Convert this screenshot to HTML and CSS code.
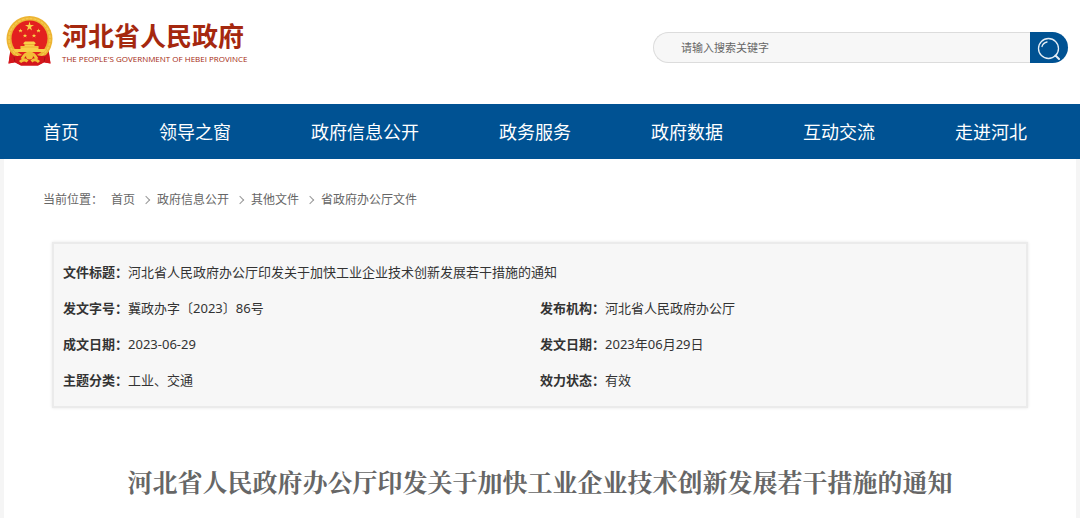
FILE: index.html
```html
<!DOCTYPE html>
<html lang="zh-CN">
<head>
    <meta charset="UTF-8">
    <title>河北省人民政府</title>
    <meta name="viewport" content="width=device-width, initial-scale=1.0">
    <link rel="stylesheet" href="styles.css">
</head>
<body>
    <header class="header">
        <a class="logo" href="#">
            <svg class="emblem" viewBox="0 0 94 100" aria-hidden="true">
                <path d="M9 66 L5 95 L18 93 L30 99 L64 99 L76 93 L89 95 L85 66 Z" fill="#d4161c"/>
                <circle cx="47" cy="46" r="46" fill="#edb433"/>
                <circle cx="47" cy="46" r="41" fill="none" stroke="#f5ca4e" stroke-width="3" stroke-dasharray="6 2"/>
                <circle cx="47" cy="45" r="36" fill="#e3211f"/>
                <path d="M47 11 L49 18 L56 18 L50 22 L52 29 L47 25 L42 29 L44 22 L38 18 L45 18 Z" fill="#f9d349"/>
                <path id="star" d="M29 25 l1 3 3 0 -2 2 1 3 -3 -2 -3 2 1 -3 -2 -2 3 0Z" fill="#f9d349"/>
                <use href="#star" x="36"/>
                <use href="#star" x="9" y="10"/>
                <use href="#star" x="27" y="10"/>
                <path d="M35 54 L38 51 H56 L59 54 V56 H57 V60 H65 V66 H80 L76 72 H18 L14 66 H29 V60 H37 V56 H35 Z" fill="#f9cf48"/>
                <path d="M37 57 H57 M30 62 H64" stroke="#e38a24" stroke-width="1"/>
                <path d="M8 76 Q24 84 36 76 H58 Q70 84 86 76 L89 95 L76 92 L64 99 H30 L18 92 L5 95 Z" fill="#d4161c"/>
                <path d="M32 86 Q38 74 47 74 Q56 74 62 86" fill="none" stroke="#f4be37" stroke-width="6"/>
                <circle cx="47" cy="80" r="7" fill="#f4be37"/>
                <path d="M28 92 Q36 84 43 91 M51 91 Q58 84 66 92" fill="none" stroke="#f4be37" stroke-width="6"/>
                <path d="M16 82 L18 92 M78 82 L76 92" stroke="#a91414" stroke-width="2"/>
            </svg>
            <span class="logo-text">
                <strong class="logo-name">河北省人民政府</strong>
                <span class="logo-en">THE PEOPLE'S GOVERNMENT OF HEBEI PROVINCE</span>
            </span>
        </a>
        <form class="search">
            <input type="text" class="search-input" placeholder="请输入搜索关键字" aria-label="请输入搜索关键字">
            <button type="submit" class="search-btn" aria-label="搜索">
                <svg viewBox="0 0 24 24" width="24" height="24" fill="none" stroke="#e4eef6" stroke-width="1.300" stroke-linecap="round">
                    <circle cx="11.500" cy="12.500" r="10"/>
                    <path d="M5 10.500 Q6 7 10 6"/>
                    <path d="M18.500 19.500 L22 23" stroke-width="2"/>
                </svg>
            </button>
        </form>
    </header>
    <nav class="nav">
        <a href="#">首页</a>
        <a href="#">领导之窗</a>
        <a href="#">政府信息公开</a>
        <a href="#">政务服务</a>
        <a href="#">政府数据</a>
        <a href="#">互动交流</a>
        <a href="#">走进河北</a>
    </nav>
    <main class="content">
        <div class="crumbs">
            <span>当前位置：</span>
            <a href="#">首页</a>
            <i class="arrow"></i>
            <a href="#">政府信息公开</a>
            <i class="arrow"></i>
            <a href="#">其他文件</a>
            <i class="arrow"></i>
            <a href="#">省政府办公厅文件</a>
        </div>
        <div class="info">
            <table class="info-table">
                <tr>
                    <td colspan="2"><b>文件标题：</b>河北省人民政府办公厅印发关于加快工业企业技术创新发展若干措施的通知</td>
                </tr>
                <tr>
                    <td><b>发文字号：</b>冀政办字〔2023〕86号</td>
                    <td><b>发布机构：</b>河北省人民政府办公厅</td>
                </tr>
                <tr>
                    <td><b>成文日期：</b>2023-06-29</td>
                    <td><b>发文日期：</b>2023年06月29日</td>
                </tr>
                <tr>
                    <td><b>主题分类：</b>工业、交通</td>
                    <td><b>效力状态：</b>有效</td>
                </tr>
            </table>
        </div>
        <h1 class="title">河北省人民政府办公厅印发关于加快工业企业技术创新发展若干措施的通知</h1>
    </main>
</body>
</html>
```

FILE: styles.css
```css
* { box-sizing: border-box; }
body {
    margin: 0;
    background: #f5f5f5;
    color: #333;
    font-family: "Noto Sans", "Noto Sans CJK SC", sans-serif;
    font-size: 13px;
}
a {
    color: inherit;
    text-decoration: none;
}
.header {
    display: flex;
    justify-content: space-between;
    align-items: flex-start;
    height: 104px;
    padding: 16px 12px 0 6px;
    background: #fff;
}
.logo {
    display: flex;
    gap: 9px;
    color: #a5280f;
}
.emblem {
    width: 47px;
    height: 50px;
}
.logo-text {
    display: flex;
    flex-direction: column;
    padding-top: 3px;
}
.logo-name {
    font-family: "Noto Sans CJK SC", sans-serif;
    font-size: 26px;
    line-height: 32px;
    font-weight: 700;
}
.logo-en {
    font-family: "Open Sans", sans-serif;
    font-size: 8px;
    line-height: 16px;
    white-space: nowrap;
}
.search {
    display: flex;
    width: 415px;
    height: 31px;
    margin-top: 16px;
}
.search-input {
    flex: 1;
    min-width: 0;
    padding: 0 27px 2px;
    border: 1px solid #dcdcdc;
    border-right: none;
    border-radius: 16px 0 0 16px;
    background: #f7f7f7;
    font-family: "Noto Sans CJK SC", sans-serif;
    font-size: 11px;
    outline: none;
}
.search-input::placeholder {
    color: #666;
}
.search-btn {
    display: flex;
    align-items: center;
    justify-content: center;
    width: 38px;
    padding: 0;
    border: none;
    border-radius: 0 16px 16px 0;
    background: #005293;
    cursor: pointer;
}
.nav {
    display: flex;
    justify-content: space-between;
    padding: 0 53px 0 43px;
    background: #005293;
    color: #fff;
    font-family: "Noto Sans CJK SC", sans-serif;
    font-size: 18px;
    line-height: 55px;
}
.content {
    min-height: 359px;
    margin: 0 4px;
    padding: 29px 48px 16px;
    background: #fff;
}
.crumbs {
    display: flex;
    align-items: center;
    gap: 8px;
    margin-left: -9px;
    color: #666;
    font-size: 12px;
    line-height: 24px;
}
.arrow {
    width: 6px;
    height: 6px;
    border: solid #999;
    border-width: 1px 1px 0 0;
    transform: rotate(45deg);
}
.info {
    margin-top: 30px;
    padding: 9px;
    border: 2px solid #ebebeb;
    background: #f7f7f7;
    box-shadow: 0 0 3px rgba(0,0,0,0.1);
}
.info-table {
    width: 100%;
    border-collapse: collapse;
    table-layout: fixed;
}
.info-table td {
    height: 36px;
    padding: 0;
}
.title {
    margin: 56px 0 0;
    color: #666;
    font-family: "Noto Serif CJK SC", "Noto Sans CJK SC", serif;
    font-size: 25px;
    line-height: 34px;
    font-weight: 700;
    text-align: center;
}
```
